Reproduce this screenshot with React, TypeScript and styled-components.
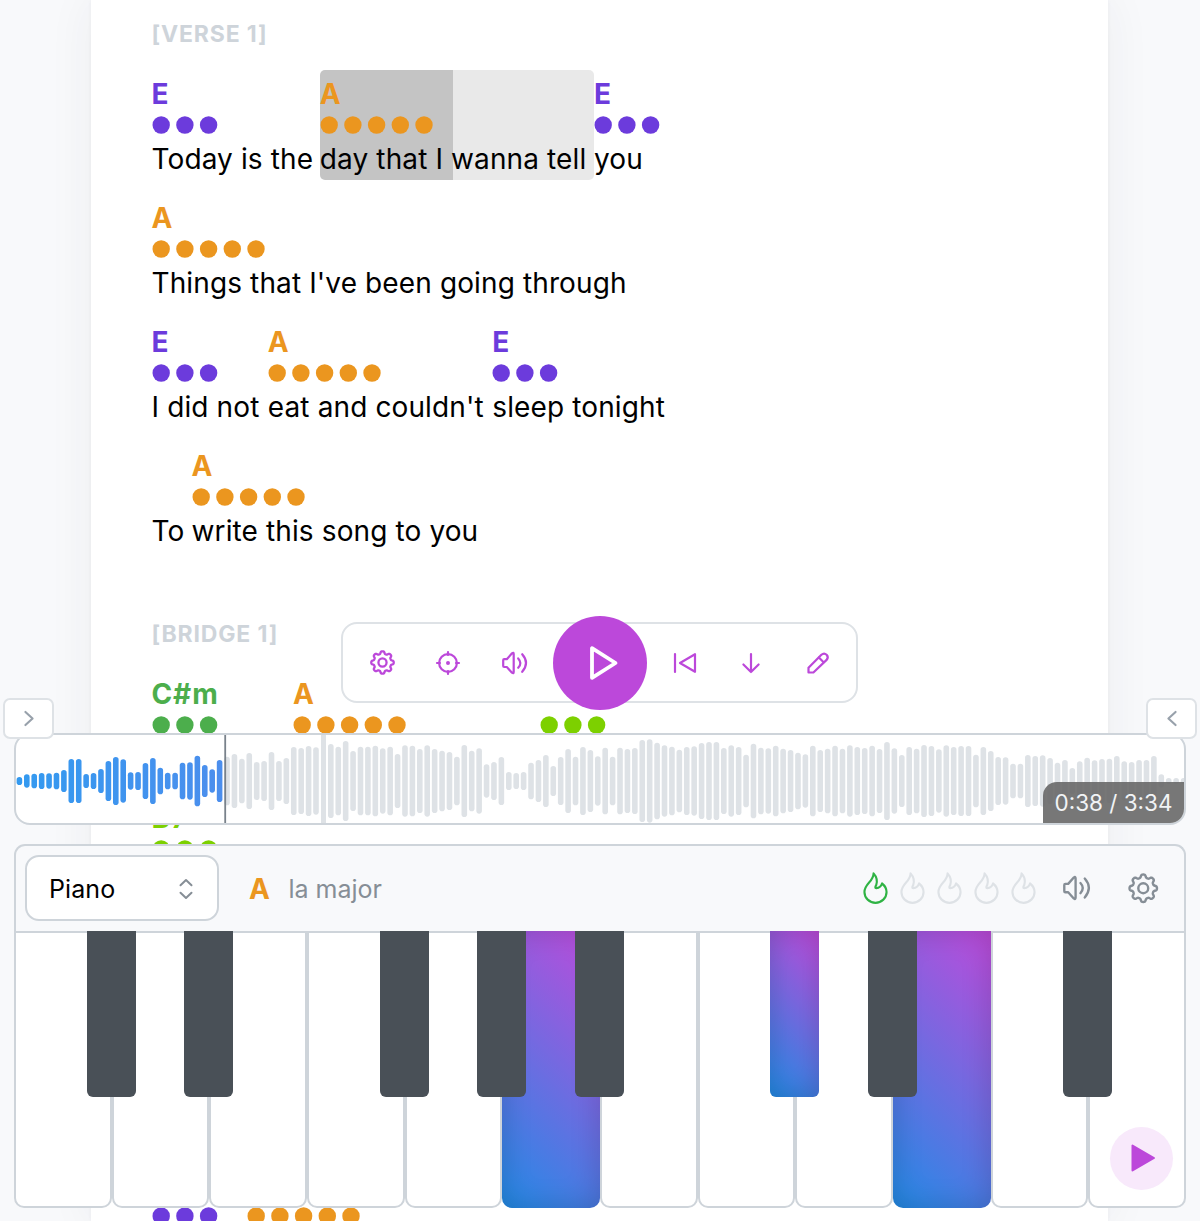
import React from "react";
import styled, { createGlobalStyle } from "styled-components";

const GlobalStyle = createGlobalStyle`
  *, *::before, *::after { box-sizing: border-box; }
  html, body { margin: 0; padding: 0; overflow: hidden; }
  body { background: #f8f9fb; font-family: Inter, "Liberation Sans", sans-serif; color: #000; }
  button { font: inherit; padding: 0; margin: 0; }
`;

const VIOLET = "#6c3bdc";
const ORANGE = "#eb961f";
const GREEN = "#4cae4c";
const LIME = "#7dd000";
const PURPLE = "#bc48da";
const LINE = "#ced4da";

/* ---------- song sheet ---------- */

const Screen = styled.div`
  position: relative;
  height: 1221px;
  overflow: hidden;
  background: #f8f9fb;
`;

const Sheet = styled.main`
  width: 1017px;
  height: 1221px;
  margin-left: 91px;
  padding: 22px 60px 0 60.5px;
  background: #fff;
  box-shadow: 0 0 45px rgba(50, 55, 65, 0.06), 0 0 4px rgba(60, 65, 75, 0.05);
`;

const SectionLabel = styled.h2<{ $gap: number }>`
  margin: 0 0 ${(p) => p.$gap}px;
  height: 24px;
  line-height: 24px;
  font-size: 23px;
  font-weight: 700;
  letter-spacing: 0.85px;
  color: ${LINE};
`;

const Verse = styled.section<{ $space: number }>`
  display: flex;
  flex-direction: column;
  gap: 14px;
  margin-bottom: ${(p) => p.$space}px;
`;

const Line = styled.div`
  display: flex;
  height: 110px;
`;

const Segment = styled.div<{ $width: number; $progress?: number }>`
  flex: none;
  width: ${(p) => p.$width}px;
  padding-top: 9px;
  white-space: pre;
  border-radius: 5px;
  background: ${(p) =>
    p.$progress ? `linear-gradient(90deg, #c4c4c4 ${p.$progress}px, #e9e9e9 ${p.$progress}px)` : "none"};
`;

const Chord = styled.div<{ $color: string }>`
  height: 30px;
  line-height: 30px;
  font-size: 28px;
  font-weight: 700;
  letter-spacing: 0.9px;
  color: ${(p) => p.$color};
`;

const DotRow = styled.svg`
  display: block;
  margin-top: 7px;
  overflow: visible;
`;

const Lyric = styled.div`
  height: 34px;
  margin-top: 8px;
  line-height: 34px;
  font-size: 28px;
  letter-spacing: 0.12px;
`;

type Seg = { w: number; chord?: string; color?: string; dots?: number; text?: string; progress?: number };

const VERSE: Seg[][] = [
  [
    { w: 168.3, chord: "E", color: VIOLET, dots: 3, text: "Today is the " },
    { w: 274.2, chord: "A", color: ORANGE, dots: 5, text: "day that I wanna tell ", progress: 133 },
    { w: 100, chord: "E", color: VIOLET, dots: 3, text: "you" },
  ],
  [{ w: 500, chord: "A", color: ORANGE, dots: 5, text: "Things that I've been going through" }],
  [
    { w: 116.3, chord: "E", color: VIOLET, dots: 3, text: "I did not " },
    { w: 224.5, chord: "A", color: ORANGE, dots: 5, text: "eat and couldn't " },
    { w: 200, chord: "E", color: VIOLET, dots: 3, text: "sleep tonight" },
  ],
  [
    { w: 40, text: "To " },
    { w: 400, chord: "A", color: ORANGE, dots: 5, text: "write this song to you" },
  ],
];

const BRIDGE: Seg[][] = [
  [
    { w: 141.5, chord: "C#m", color: GREEN, dots: 3 },
    { w: 246.8, chord: "A", color: ORANGE, dots: 5 },
    { w: 100, color: LIME, dots: 3 },
  ],
  [{ w: 200, chord: "B7", color: LIME, dots: 3 }],
];

const NEXT: Seg[][] = [
  [
    { w: 95, color: VIOLET, dots: 3 },
    { w: 200, color: ORANGE, dots: 5 },
  ],
];

function Dots({ count, color }: { count: number; color: string }) {
  return (
    <DotRow width={118} height={18} fill={color}>
      {Array.from({ length: count }, (_, k) => (
        <circle key={k} cx={9.2 + k * 23.7} cy={9} r={8.7} />
      ))}
    </DotRow>
  );
}

function Lines({ lines, space }: { lines: Seg[][]; space: number }) {
  return (
    <Verse $space={space}>
      {lines.map((segs, i) => (
        <Line key={i}>
          {segs.map((s, j) => (
            <Segment key={j} $width={s.w} $progress={s.progress}>
              <Chord $color={s.color ?? "#000"}>{s.chord}</Chord>
              <Dots count={s.dots ?? 0} color={s.color ?? "#000"} />
              <Lyric>{s.text}</Lyric>
            </Segment>
          ))}
        </Line>
      ))}
    </Verse>
  );
}

/* ---------- icons ---------- */

const Svg = styled.svg`
  display: block;
  flex: none;
  overflow: visible;
  fill: none;
  stroke: currentColor;
  stroke-linecap: round;
  stroke-linejoin: round;
`;

const gearPath = (() => {
  const pts: string[] = [];
  for (let i = 0; i < 240; i++) {
    const a = (i / 240) * Math.PI * 2;
    const r = 9.6 + 1.25 * Math.tanh(1.8 * Math.cos(8 * a));
    pts.push(`${(12 + r * Math.sin(a)).toFixed(2)} ${(12 - r * Math.cos(a)).toFixed(2)}`);
  }
  return `M${pts.join("L")}Z`;
})();

const Gear = ({ size, stroke = 2.2 }: { size: number; stroke?: number }) => (
  <Svg width={size} height={size} viewBox="0 0 24 24" strokeWidth={stroke}>
    <path d={gearPath} />
    <circle cx="12" cy="12" r="3.9" />
  </Svg>
);

const Target = () => (
  <Svg width={24} height={24} viewBox="0 0 24 24" strokeWidth={2.2}>
    <circle cx="12" cy="12" r="8.9" />
    <path d="M12 1V4M12 20v3M1 12H4M20 12h3" />
    <circle cx="12" cy="12" r="0.9" fill="currentColor" />
  </Svg>
);

const Volume = ({ size, stroke = 2.2 }: { size: number; stroke?: number }) => (
  <Svg width={size} height={size} viewBox="0 0 26 26" strokeWidth={stroke}>
    <path d="M2.200 9.200h2.600L10 3.300q1.700-1.400 1.700.8v17.800q0 2.200-1.700.8L4.800 17H2.200q-1 0-1-1v-5.800q0-1 1-1Z" />
    <path d="M16.200 8.400q4.300 4.600 0 9.400M20.200 4.200q7.600 8.600 0 17.600" />
  </Svg>
);

const SkipBack = () => (
  <Svg width={22} height={20} viewBox="0 0 22 20" strokeWidth={2.200}>
    <path d="M1 1v18M21 1.200v17.600L6 10Z" />
  </Svg>
);

const ArrowDown = () => (
  <Svg width={18} height={20} viewBox="0 0 18 20" strokeWidth={2.200}>
    <path d="M9 1v18M1.400 11.500 9 19l7.600-7.500" />
  </Svg>
);

const Pencil = () => (
  <Svg width={22} height={22} viewBox="0 0 22 22" strokeWidth={2.200}>
    <path d="M1.500 20.500v-4.700L14.400 2.800q2.700-2.400 5.200 0q2.300 2.500 0 5.100L6.400 20.500Z" />
    <path d="M11.900 5.500 16.600 10.200" />
  </Svg>
);

const Flame = () => (
  <Svg width={25} height={32} viewBox="0 0 26 32" preserveAspectRatio="none" strokeWidth={2.200}>
    <path d="M11 1.400C11 9.500 1.500 11.500 1.500 20a11.500 10.800 0 0 0 23 0q-.1-5-4.700-8.500q-1.300 4.200-6 4.700q-2-.2 0-3.400q2-6.400-2.800-11.400Z" />
  </Svg>
);

/* ---------- toolbar ---------- */

const Toolbar = styled.div`
  position: absolute;
  left: 341px;
  top: 622px;
  width: 517px;
  height: 81px;
  display: flex;
  align-items: center;
  border: 2px solid #dee2e6;
  border-radius: 16px;
  background: #fff;
`;

const ToolGroup = styled.div<{ $pad?: number }>`
  display: flex;
  flex: 1;
  justify-content: center;
  padding-left: ${(p) => p.$pad ?? 0}px;
`;

const ToolButton = styled.button`
  display: grid;
  place-items: center;
  width: 66.4px;
  height: 60px;
  border: 0;
  background: none;
  color: ${PURPLE};
`;

const PlayButton = styled.button`
  display: grid;
  place-items: center;
  flex: none;
  width: 94px;
  height: 94px;
  padding-left: 5px;
  border: 0;
  border-radius: 50%;
  background: ${PURPLE};
  color: #fff;
`;

/* ---------- dock ---------- */

const Dock = styled.div`
  position: absolute;
  left: 14px;
  right: 14px;
  top: 733px;
  display: flex;
  flex-direction: column;
  gap: 19px;
`;

const WavePanel = styled.div`
  position: relative;
  height: 92px;
  border: 2px solid ${LINE};
  border-radius: 16px;
  background: #fff;
  overflow: hidden;
`;

const Time = styled.div`
  position: absolute;
  right: 0;
  bottom: 0;
  width: 141px;
  height: 41px;
  line-height: 42px;
  text-align: center;
  font-size: 22.5px;
  color: #f1f3f5;
  background: rgba(104, 104, 104, 0.9);
  border-top-left-radius: 14px;
`;

const SideTab = styled.button<{ $side: "left" | "right" }>`
  position: absolute;
  top: 698px;
  ${(p) => p.$side}: 3px;
  display: grid;
  place-items: center;
  width: 51px;
  height: 40.5px;
  border: 2px solid #dee2e6;
  border-radius: 7px;
  background: #fff;
  color: #98a1ab;
`;

const halves = [
  12, 20, 22, 24, 23, 25, 33, 66, 66, 21, 24, 36, 60, 72, 65, 26, 27, 54, 69, 40, 25, 25, 55, 56, 76, 48, 35, 63, 73, 81,
  67, 84, 57, 60, 87, 60, 69, 102, 99, 105, 101, 0, 111, 103, 120, 90, 103, 103, 106, 98, 103, 81, 107, 106, 96, 107,
  96, 91, 87, 73, 108, 91, 98, 50, 57, 72, 27, 24, 27, 55, 63, 78, 45, 72, 96, 73, 102, 93, 74, 100, 73, 100, 96, 99,
  123, 125, 115, 107, 103, 94, 102, 104, 114, 117, 117, 99, 107, 102, 79, 112, 100, 98, 106, 97, 93, 85, 80, 106, 93,
  97, 106, 97, 107, 102, 99, 106, 96, 117, 98, 78, 102, 97, 108, 105, 95, 107, 102, 105, 105, 79, 102, 90, 72, 71, 52,
  52, 78, 75, 77, 69, 55, 63, 39, 59, 70, 62, 66, 67, 75, 59, 57, 63, 63, 75, 20, 9, 9, 9,
];

const WaveSvg = styled.svg`
  display: block;
`;

function Waveform() {
  return (
    <WaveSvg width="1168" height="88" viewBox="16 735 1168 88">
      <defs>
        <linearGradient id="played" gradientUnits="userSpaceOnUse" x1="16" y1="0" x2="1184" y2="0">
          <stop offset="0" stopColor="#339af0" />
          <stop offset="0.18" stopColor="#4c8eed" />
          <stop offset="1" stopColor="#be4bdb" />
        </linearGradient>
      </defs>
      <rect x="321" y="735" width="5" height="88" fill="#dee2e6" />
      {halves.map((h, i) =>
        h === 0 ? null : (
          <rect
            key={i}
            x={16.6 + i * 7.415}
            y={781 - h / 3}
            width={5.6}
            height={(h / 3) * 2}
            rx={2.8}
            fill={i < 28 ? "url(#played)" : "#dee2e6"}
          />
        )
      )}
      <rect x="224.300" y="735" width="1.800" height="88" fill="#79828b" />
    </WaveSvg>
  );
}

const Instrument = styled.div`
  position: relative;
`;

const InstrumentBar = styled.div`
  display: flex;
  align-items: center;
  height: 87px;
  padding: 0 26px 1px 9px;
  border: 2px solid ${LINE};
  border-bottom: 0;
  border-radius: 11px 11px 0 0;
  background: #f8f9fb;
`;

const Select = styled.button`
  display: flex;
  align-items: center;
  justify-content: space-between;
  width: 194px;
  height: 66px;
  padding: 1px 24px 0 22px;
  border: 2px solid ${LINE};
  border-radius: 14px;
  background: #fff;
  color: #000;
  font-size: 25px;
  letter-spacing: 0.1px;
`;

const CurrentChord = styled.strong`
  margin-left: 30px;
  padding-top: 1px;
  width: 39.5px;
  font-size: 28px;
  color: ${ORANGE};
`;

const ChordName = styled.span`
  flex: 1;
  padding-top: 1px;
  font-size: 25px;
  color: #868e96;
`;

const Difficulty = styled.div`
  display: flex;
  gap: 12px;
  margin-right: 26.5px;
`;

const Level = styled.span<{ $on: boolean }>`
  color: ${(p) => (p.$on ? "#2fb344" : "#dee2e6")};
`;

const BarButton = styled.button<{ $gap?: number }>`
  margin-left: ${(p) => p.$gap ?? 0}px;
  border: 0;
  background: none;
  color: #868e96;
`;

const Keyboard = styled.div`
  display: grid;
  grid-template-columns: repeat(12, 1fr);
  height: 277px;
`;

const glow = `
  background: linear-gradient(45deg, #228be6 0%, #be4bdb 100%);
  box-shadow: inset 0 0 30px rgba(0, 0, 0, 0.18);
`;

const WhiteKey = styled.div<{ $active: boolean }>`
  position: relative;
  border: 2px solid ${LINE};
  border-radius: 0 0 10px 10px;
  background: #fff;
  ${(p) => (p.$active ? `${glow} border: 0;` : "")}
`;

const BlackKey = styled.div<{ $active: boolean; $inset: number }>`
  position: absolute;
  z-index: 1;
  top: ${(p) => -p.$inset}px;
  right: ${(p) => -24.1 - p.$inset}px;
  width: 49px;
  height: 166px;
  border-radius: 0 0 6px 6px;
  background: #495057;
  ${(p) => (p.$active ? glow : "")}
`;

const ListenButton = styled.button`
  position: absolute;
  right: 13px;
  bottom: 18.5px;
  display: grid;
  place-items: center;
  width: 63px;
  height: 63px;
  padding-left: 4px;
  border: 0;
  border-radius: 50%;
  background: #f8e9fb;
  color: ${PURPLE};
`;

const sharps = [0, 1, 3, 4, 5, 7, 8, 10];

export default function App() {
  return (
    <Screen>
      <GlobalStyle />
      <Sheet>
        <SectionLabel $gap={24}>[VERSE 1]</SectionLabel>
        <Lines lines={VERSE} space={70} />
        <SectionLabel $gap={24}>[BRIDGE 1]</SectionLabel>
        <Lines lines={BRIDGE} space={257} />
        <Lines lines={NEXT} space={0} />
      </Sheet>

      <Toolbar>
        <ToolGroup $pad={1}>
          <ToolButton><Gear size={25} /></ToolButton>
          <ToolButton><Target /></ToolButton>
          <ToolButton><Volume size={26} /></ToolButton>
        </ToolGroup>
        <PlayButton>
          <Svg width={28} height={34} viewBox="0 0 28 34" strokeWidth={3.8}>
            <path d="M3 2.200v29.600L26.500 17Z" />
          </Svg>
        </PlayButton>
        <ToolGroup>
          <ToolButton><SkipBack /></ToolButton>
          <ToolButton><ArrowDown /></ToolButton>
          <ToolButton><Pencil /></ToolButton>
        </ToolGroup>
      </Toolbar>

      <Dock>
        <WavePanel>
          <Waveform />
          <Time>0:38 / 3:34</Time>
        </WavePanel>
        <Instrument>
          <InstrumentBar>
            <Select>
              Piano
              <Svg width={14} height={20} viewBox="0 0 14 20" strokeWidth={2} color="#868e96">
                <path d="M1.500 6.300 7 1l5.500 5.300M1.500 13.700 7 19l5.500-5.300" />
              </Svg>
            </Select>
            <CurrentChord>A</CurrentChord>
            <ChordName>la major</ChordName>
            <Difficulty>
              {[0, 1, 2, 3, 4].map((i) => (
                <Level key={i} $on={i === 0}><Flame /></Level>
              ))}
            </Difficulty>
            <BarButton><Volume size={28} /></BarButton>
            <BarButton $gap={37}><Gear size={30.5} stroke={1.9} /></BarButton>
          </InstrumentBar>
          <Keyboard>
            {Array.from({ length: 12 }, (_, i) => {
              const active = i === 5 || i === 9;
              return (
                <WhiteKey key={i} $active={active}>
                  {sharps.includes(i) && <BlackKey $active={i === 7} $inset={active ? 0 : 2} />}
                </WhiteKey>
              );
            })}
          </Keyboard>
          <ListenButton>
            <svg width="25" height="28" viewBox="0 0 25 28">
              <path d="M1.500 1.500v25L23 14Z" fill="currentColor" stroke="currentColor" strokeWidth="2" strokeLinejoin="round" />
            </svg>
          </ListenButton>
        </Instrument>
      </Dock>
      <SideTab $side="left">
        <Svg width={10} height={15} viewBox="0 0 10 16" strokeWidth={2.300}><path d="M1.200 1 8.800 8l-7.600 7" /></Svg>
      </SideTab>
      <SideTab $side="right">
        <Svg width={10} height={15} viewBox="0 0 10 16" strokeWidth={2.300}><path d="M8.800 1 1.200 8l7.600 7" /></Svg>
      </SideTab>
    </Screen>
  );
}
